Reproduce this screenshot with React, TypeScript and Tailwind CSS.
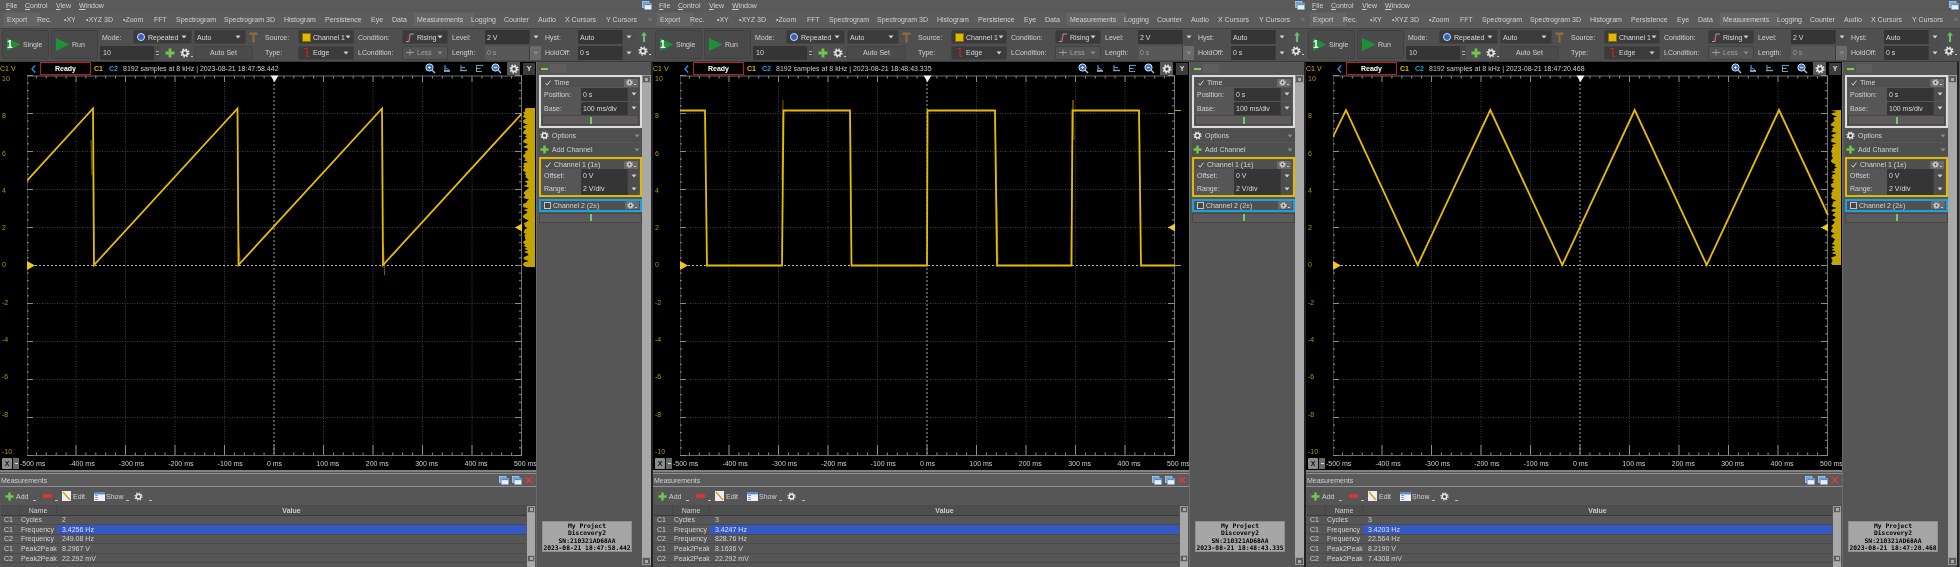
import React from "react";

const FONT = "[font-family:'Liberation_Sans',Arial,sans-serif]";

type PanelData = {
  stamp: string;
  waves: string;
  ghosts: string[];
  strip: [number, number, number, number] | null;
  values: [string, string, string, string, string];
};

const tabs = ["Export","Rec.","•XY","•XYZ 3D","•Zoom","FFT","Spectrogram","Spectrogram 3D","Histogram","Persistence","Eye","Data","Measurements","Logging","Counter","Audio","X Cursors","Y Cursors","»"];

function Caret({ dim }: { dim?: boolean }) {
  return (
    <svg width="6" height="4" viewBox="0 0 6 4" className="shrink-0">
      <path d="M0.5 0.5H5.5L3 3.5Z" fill={dim ? "#8a8a8a" : "#d0d0d0"} />
    </svg>
  );
}

function Gear({ size = 10, small }: { size?: number; small?: boolean }) {
  return (
    <span className="inline-flex items-end shrink-0">
      <svg width={size} height={size} viewBox="0 0 12 12">
        <circle cx="6" cy="6" r="4.6" fill="none" stroke="#e4e4e4" strokeWidth="1.8" strokeDasharray="1.8 1.8" />
        <circle cx="6" cy="6" r="3" fill="none" stroke="#e4e4e4" strokeWidth="2" />
        <circle cx="6" cy="6" r="1.1" fill="#3a3a3a" />
      </svg>
      {small && <span className="w-[2px] h-[1px] bg-[#ccc] ml-[1px] mb-[1px]" />}
    </span>
  );
}

function Plus({ size = 9 }: { size?: number }) {
  return (
    <svg width={size} height={size} viewBox="0 0 10 10" className="shrink-0">
      <path d="M3.6 0.5H6.4V3.6H9.5V6.4H6.4V9.5H3.6V6.4H0.5V3.6H3.6Z" fill="#6fc84a" />
    </svg>
  );
}

function UpArrow() {
  return (
    <svg width="6" height="10" viewBox="0 0 6 10">
      <path d="M3 0L6 3.5H4.1V10H1.9V3.5H0Z" fill="#66c26a" />
    </svg>
  );
}

function Play({ one }: { one?: boolean }) {
  return (
    <span className="relative inline-flex w-[15px] h-[15px] shrink-0">
      <svg width="15" height="15" viewBox="0 0 15 15">
        <path d="M1 1L14.5 7.5L1 14Z" fill="#1d9138" />
      </svg>
      {one && <span className="absolute left-[1px] top-[2px] text-[10px] leading-[11px] font-bold text-white">1</span>}
    </span>
  );
}

function Magnifier({ minus }: { minus?: boolean }) {
  return (
    <svg width="11" height="11" viewBox="0 0 11 11">
      <circle cx="4.5" cy="4.5" r="3.6" fill={minus ? "#3f78c8" : "#2f68c0"} stroke="#d9e4f0" strokeWidth="1" />
      <path d="M7 7L10 10" stroke="#aab2ba" strokeWidth="1.6" />
      <path d={minus ? "M3 4.5H6" : "M3 4.5H6M4.5 3V6"} stroke="#fff" strokeWidth="0.8" />
    </svg>
  );
}

function AlignIcon({ kind }: { kind: number }) {
  return (
    <svg width="9" height="9" viewBox="0 0 9 9">
      {kind === 0 && <><path d="M2 1V6" stroke="#3f9be0" strokeWidth="1.2" /><path d="M1 6H7V8H1Z" fill="#8a98a6" /><path d="M2 3.5L6 6" stroke="#3f9be0" /></>}
      {kind === 1 && <><path d="M2 1V7" stroke="#8a98a6" /><path d="M2 3.5H6" stroke="#3f9be0" strokeWidth="1.2" /><path d="M1 6.5H8" stroke="#8a98a6" strokeWidth="1.4" /></>}
      {kind === 2 && <><path d="M1 1.5H8" stroke="#3f9be0" strokeWidth="1.2" /><path d="M1.5 1V8" stroke="#8a98a6" /><path d="M1 4.5H5.5M1 7.5H7" stroke="#8a98a6" strokeWidth="1.2" /></>}
    </svg>
  );
}

function WinIcon() {
  return (
    <svg width="10" height="9" viewBox="0 0 10 9">
      <rect x="0.5" y="0.5" width="6.5" height="6" fill="#6ea6dc" stroke="#cfe2f4" strokeWidth="0.6" />
      <rect x="2.5" y="2.5" width="7" height="6" fill="#e8eef6" stroke="#7fa8d6" strokeWidth="0.6" />
      <rect x="2.5" y="2.5" width="7" height="1.6" fill="#4f8ed0" />
    </svg>
  );
}

function Label({ w, children }: { w: string; children: React.ReactNode }) {
  return <span className={`${w} shrink-0 text-[#cfcfcf]`}>{children}</span>;
}

function Drop({ w, icon, text, dim }: { w: string; icon?: React.ReactNode; text: string; dim?: boolean }) {
  return (
    <div className={`${w} h-[14px] flex items-center px-[1px] rounded-[2px] border border-[#434343] ${dim ? "bg-[#545454] text-[#a0a0a0]" : "bg-[#3b3b3b] text-[#d8d8d8]"}`}>
      {icon ? <span className="w-[12px] mr-[1px] flex justify-center shrink-0">{icon}</span> : <span className="w-[1px]" />}
      <span className="flex-1 whitespace-nowrap">{text}</span>
      <Caret dim={dim} />
      <span className="w-[3px] shrink-0" />
    </div>
  );
}

function Input({ w, text, dim, h = "h-[14px]" }: { w: string; text: string; dim?: boolean; h?: string }) {
  return (
    <div className={`${w} ${h} flex items-stretch rounded-[1px] overflow-hidden`}>
      <div className={`flex-1 flex items-center pl-[2px] ${dim ? "bg-[#585858] text-[#9c9c9c]" : "bg-[#353535] text-[#d8d8d8]"}`}>{text}</div>
      <div className={`w-[12px] flex items-center justify-center border-l border-[#3d3d3d] ${dim ? "bg-[#6a6a6a]" : "bg-[#4d4d4d]"}`}>
        <Caret dim={dim} />
      </div>
    </div>
  );
}

function CtrlRow({ children }: { children: React.ReactNode }) {
  return <div className="h-[14px] flex items-center">{children}</div>;
}

function SidebarField({ label, value }: { label: string; value: string }) {
  return (
    <div className="flex items-center h-[14px]">
      <span className="w-[39px] pl-[2px] text-[#d0d0d0] shrink-0">{label}</span>
      <Input w="w-[58px]" text={value} h="h-[13px]" />
    </div>
  );
}

function SliderBar({ w }: { w: string }) {
  return (
    <div className={`${w} h-[10px] bg-[#5e5a5a] border border-[#474747] flex items-center justify-center`}>
      <span className="w-[2px] h-[7px] bg-[#6ccf76]" />
    </div>
  );
}

function SectionHead({ title, check, box }: { title: string; check?: boolean; box?: boolean }) {
  return (
    <div className="h-[9px] flex items-center bg-[#505050] text-[#d4d4d4]">
      <span className="w-[12px] flex justify-center shrink-0">
        {check && <svg width="6" height="6" viewBox="0 0 6 6"><path d="M0.6 3.2L2.2 5.2L5.4 0.6" fill="none" stroke="#e0e0e0" strokeWidth="0.9" /></svg>}
        {box && <span className="w-[7px] h-[7px] bg-[#474747] border border-[#c4c4c4]" />}
      </span>
      <span className="flex-1">{title}</span>
      <span className="w-[14px] h-[8px] flex items-center justify-center bg-[#6a6a6a] rounded-[1px] mr-[1px]"><Gear size={7} small /></span>
    </div>
  );
}

function Plot({ d }: { d: PanelData }) {
  const xs = Array.from({ length: 11 }, (_, i) => 26.5 + 49.5 * i);
  const ys = Array.from({ length: 11 }, (_, i) => 75.5 + 38 * i);
  const topTicks = Array.from({ length: 51 }, (_, i) => 26.5 + 9.9 * i);
  const sideTicks = Array.from({ length: 51 }, (_, i) => 75.5 + 7.6 * i);
  const strip = d.strip;
  let stripPts = "";
  if (strip) {
    const [x0, x1, y0, y1] = strip;
    const pts: string[] = [`${x1},${y0}`, `${x1},${y1}`];
    for (let y = y1; y >= y0; y -= 1.5) {
      const r = Math.abs(Math.sin(y * 12.9898) * 43758.5453) % 1;
      pts.push(`${(x0 + r * r * 6).toFixed(1)},${y}`);
    }
    stripPts = pts.join(" ");
  }
  return (
    <svg width="509" height="381" viewBox="27 75 509 381" className="block">
      <rect x="27" y="75" width="509" height="381" fill="#000" />
      {xs.slice(1, 10).map((x, i) => (
        <line key={x} x1={x} x2={x} y1="76" y2="455" stroke={i === 4 ? "#a8a8a8" : "#3e3e3e"} strokeWidth="1" strokeDasharray={i === 4 ? "2 2" : "1 1.5"} />
      ))}
      {ys.slice(1, 10).map((y, i) => (
        <line key={y} x1="27" x2="521" y1={y} y2={y} stroke={i === 4 ? "#b4b4b4" : "#3e3e3e"} strokeWidth="1" strokeDasharray={i === 4 ? "2 2" : "1 1.5"} />
      ))}
      <path d="M27 76H521.5M27 455.5H521.5M27 76V456M521.5 76V456" stroke="#6e6e6e" strokeWidth="1" fill="none" />
      {topTicks.map((x, i) => (
        <g key={x}>
          <line x1={x} x2={x} y1="76" y2={i % 5 === 0 ? 82 : 78.5} stroke="#8c8c8c" />
          <line x1={x} x2={x} y1={i % 5 === 0 ? 445 : 452.5} y2="455" stroke="#8c8c8c" />
        </g>
      ))}
      {sideTicks.map((y, i) => (
        <g key={y}>
          <line x1="27" x2={i % 5 === 0 ? 33 : 29} y1={y} y2={y} stroke="#8c8c8c" />
          <line x1={i % 5 === 0 ? 515 : 519} x2="521.5" y1={y} y2={y} stroke="#8c8c8c" />
        </g>
      ))}
      {d.ghosts.map((g) => (
        <polyline key={g} points={g} fill="none" stroke="#7a6500" strokeWidth="1" />
      ))}
      <polyline points={d.waves} fill="none" stroke="#e6bc00" strokeWidth="1.8" strokeLinejoin="miter" />
      {strip && <polygon points={stripPts} fill="#c4a400" />}
      {!strip && (
        <path d="M522 110.5H528M522 265.5H528" stroke="#c4a400" strokeWidth="1" />
      )}
      <polygon points="27,261 35,265.5 27,270" fill="#f0c820" />
      <polygon points="515,227.5 522,223.5 522,231.5" fill="#f0c820" />
      <polygon points="270.5,75.5 278.5,75.5 274.5,82" fill="#f0f0f0" />
    </svg>
  );
}

function Panel({ d, width }: { d: PanelData; width: string }) {
  const rows: [string, string, string, boolean][] = [
    ["C1", "Cycles", d.values[0], false],
    ["C1", "Frequency", d.values[1], true],
    ["C2", "Frequency", d.values[2], false],
    ["C1", "Peak2Peak", d.values[3], false],
    ["C2", "Peak2Peak", d.values[4], false],
  ];
  return (
    <div className={`${width} h-[567px] flex flex-col bg-[#565656] overflow-hidden text-[7px] leading-[9px] text-[#d0d0d0]`}>
      {/* menu */}
      <div className="h-[10px] flex items-center bg-[#5a5a5a] shrink-0 pl-[6px] relative">
        <span className="w-[19px]"><u>F</u>ile</span>
        <span className="w-[31px]"><u>C</u>ontrol</span>
        <span className="w-[23px]"><u>V</u>iew</span>
        <span><u>W</u>indow</span>
        <span className="ml-auto mr-[1px] mt-[1px]"><WinIcon /></span>
      </div>
      {/* tabs */}
      <div className="h-[18px] mt-[1px] bg-[#5c5c5c] border-b border-[#444] shrink-0 grid items-center pl-[7px] grid-cols-[30px_27px_22px_37px_31px_22px_48px_60px_41px_46px_21px_25px_54px_33px_34px_27px_41px_42px_6px]">
        {tabs.map((t) => (
          <span key={t} className="whitespace-nowrap relative">
            {(t === "Export" || t === "Measurements") && (
              <span className="absolute -left-[3px] -top-[2px] -bottom-[2px] -right-[3px] border border-[#666] bg-[#646464] rounded-[1px]" />
            )}
            <span className={`relative ${t === "»" ? "text-[#8a8a8a]" : ""}`}>{t}</span>
          </span>
        ))}
      </div>
      {/* controls */}
      <div className="h-[33px] bg-[#4f4f4f] border-b border-[#3c3c3c] flex shrink-0 pt-[1px] pl-[2px]">
        <div className="w-[47px] h-[29px] mr-[2px] flex items-center gap-[2px] pl-[3px] bg-[#4a4a4a] border border-[#414141] rounded-[2px]">
          <Play one /> <span>Single</span>
        </div>
        <div className="w-[47px] h-[29px] mr-[2px] flex items-center gap-[2px] pl-[3px] bg-[#4a4a4a] border border-[#414141] rounded-[2px]">
          <Play /> <span>Run</span>
        </div>
        <div className="w-[165px] flex flex-col gap-[1.5px]">
          <CtrlRow>
            <Label w="w-[33px] pl-[2px]">Mode:</Label>
            <Drop w="w-[59px]" text="Repeated" icon={<span className="w-[8px] h-[8px] rounded-full bg-[#2e62c4] border border-[#dde]" />} />
            <div className="w-[2px]" />
            <Drop w="w-[52px]" text="Auto" />
            <svg width="9" height="11" viewBox="0 0 9 11" className="ml-[3px]"><path d="M0.5 0.5H8.5V3H5.6V10.5H3.4V3H0.5Z" fill="#8d6a38" /></svg>
          </CtrlRow>
          <CtrlRow>
            <div className="w-[60px] h-[14px] flex items-stretch bg-[#353535] rounded-[1px]">
              <span className="flex-1 flex items-center pl-[3px] text-[#d8d8d8]">10</span>
              <span className="w-[6px] flex flex-col items-center justify-center gap-[2px] bg-[#484848]">
                <span className="w-[3px] h-[1px] bg-[#aaa]" />
                <span className="w-[3px] h-[1px] bg-[#aaa]" />
              </span>
            </div>
            <span className="w-[18px] flex justify-center pl-[1px]"><Plus size={10} /></span>
            <span className="w-[16px] flex justify-center"><Gear size={10} small /></span>
            <div className="w-[59px] h-[14px] flex items-center justify-center bg-[#4b4b4b] border border-[#444] rounded-[2px]">Auto Set</div>
          </CtrlRow>
        </div>
        <div className="w-[93px] flex flex-col gap-[1.5px]">
          <CtrlRow>
            <Label w="w-[33px]">Source:</Label>
            <Drop w="w-[56px]" text="Channel 1" icon={<span className="w-[9px] h-[9px] bg-[#e2b800] border border-[#8a7000]" />} />
          </CtrlRow>
          <CtrlRow>
            <Label w="w-[33px]">Type:</Label>
            <Drop w="w-[56px]" text="Edge" icon={<svg width="7" height="9" viewBox="0 0 7 9"><path d="M1 0.5H4V8.5H6" fill="none" stroke="#c22" strokeWidth="1.2" /></svg>} />
          </CtrlRow>
        </div>
        <div className="w-[94px] flex flex-col gap-[1.5px]">
          <CtrlRow>
            <Label w="w-[44px]">Condition:</Label>
            <Drop w="w-[46px]" text="Rising" icon={<svg width="8" height="9" viewBox="0 0 8 9"><path d="M0 8.5H3L4 1H8" fill="none" stroke="#bbb" strokeWidth="0.8" /><path d="M1.5 6L5 3.5" stroke="#d22" strokeWidth="1.4" /></svg>} />
          </CtrlRow>
          <CtrlRow>
            <Label w="w-[44px]">LCondition:</Label>
            <Drop w="w-[46px]" text="Less" dim icon={<svg width="8" height="7" viewBox="0 0 8 7"><path d="M0 3.5H8M4 0.5V6.5" stroke="#aaa" strokeWidth="0.8" /></svg>} />
          </CtrlRow>
        </div>
        <div className="w-[93px] flex flex-col gap-[1.5px]">
          <CtrlRow><Label w="w-[33px]">Level:</Label><Input w="w-[56px]" text="2 V" /></CtrlRow>
          <CtrlRow><Label w="w-[33px]">Length:</Label><Input w="w-[56px]" text="0 s" dim /></CtrlRow>
        </div>
        <div className="w-[93px] flex flex-col gap-[1.5px]">
          <CtrlRow><Label w="w-[33px]">Hyst:</Label><Input w="w-[56px]" text="Auto" /></CtrlRow>
          <CtrlRow><Label w="w-[33px]">HoldOff:</Label><Input w="w-[56px]" text="0 s" /></CtrlRow>
        </div>
        <div className="w-[12px] flex flex-col items-center">
          <CtrlRow><UpArrow /></CtrlRow>
          <CtrlRow><Gear size={10} small /></CtrlRow>
        </div>
      </div>
      {/* body */}
      <div className="flex-1 flex min-h-0">
        <div className="w-[536px] shrink-0 flex flex-col">
          <div className="h-[13px] bg-black flex items-center shrink-0">
            <span className="w-[27px] text-[#d2ae00]">C1 V</span>
            <span className="w-[13px] flex justify-center">
              <svg width="5" height="8" viewBox="0 0 5 8"><path d="M4.2 0.6L1 4L4.2 7.4" fill="none" stroke="#2b8cf0" strokeWidth="1.4" /></svg>
            </span>
            <span className="w-[51px] h-[13px] flex items-center justify-center border border-[#b3202a] text-white font-bold">Ready</span>
            <span className="ml-[3px] w-[15px] font-bold text-[#e4ba00]">C1</span>
            <span className="w-[14px] font-bold text-[#22a0e0]">C2</span>
            <span className="text-[#cccccc] whitespace-nowrap">8192 samples at 8 kHz | {d.stamp}</span>
            <span className="ml-auto flex items-center gap-[7px] pr-[1px]">
              <Magnifier />
              <AlignIcon kind={0} />
              <AlignIcon kind={1} />
              <AlignIcon kind={2} />
              <Magnifier minus />
              <span className="w-[13px] h-[13px] -ml-[2px] flex items-center justify-center bg-[#565656]"><Gear size={10} /></span>
              <span className="w-[12px] h-[12px] -ml-[4px] flex items-center justify-center bg-[#3c3c3c] text-[#e0e0e0] font-bold">Y</span>
            </span>
          </div>
          <div className="h-[381px] flex bg-black shrink-0">
            <div className="w-[27px] flex flex-col justify-between pl-[2px] text-[#b09600]">
              {["10","8","6","4","2","0","-2","-4","-6","-8","-10"].map((n) => (
                <span key={n} className="h-[8px] leading-[8px]">{n}</span>
              ))}
            </div>
            <Plot d={d} />
          </div>
          <div className="h-[14px] bg-black flex items-center shrink-0 text-[#cccccc]">
            <span className="w-[20px] flex items-center pl-[2px] gap-[1px]">
              <span className="w-[10px] h-[11px] bg-[#8c8c8c] text-[#111] font-bold flex items-center justify-center rounded-[1px]">X</span>
              <span className="w-[6px] h-[11px] bg-[#6a6a6a] flex items-center justify-center"><span className="w-[3px] h-[1px] bg-[#ddd]" /></span>
            </span>
            <div className="grid grid-cols-[repeat(10,49.4px)_22px]">
              {["-500 ms","-400 ms","-300 ms","-200 ms","-100 ms","0 ms","100 ms","200 ms","300 ms","400 ms","500 ms"].map((t) => (
                <span key={t} className="whitespace-nowrap">{t}</span>
              ))}
            </div>
          </div>
          {/* measurements */}
          <div className="flex-1 bg-[#565656] flex flex-col min-h-0 border-t-2 border-[#828282]">
            <div className="h-[14px] mt-[1px] border-y border-[#8e8e8e] flex items-center pl-[1px] bg-[#5b5b5b] shrink-0">
              <span>Measurements</span>
              <span className="ml-auto flex items-center gap-[3px] pr-[3px]">
                <WinIcon />
                <WinIcon />
                <svg width="8" height="8" viewBox="0 0 8 8"><path d="M1 1L7 7M7 1L1 7" stroke="#e03a3a" strokeWidth="1.7" /></svg>
              </span>
            </div>
            <div className="h-[19px] flex items-center bg-[#565656] shrink-0 pl-[5px] border-b border-[#4c4c4c]">
              <Plus size={9} />
              <span className="ml-[2px] w-[17px]">Add</span>
              <span className="w-[3px] h-[1px] bg-[#bbb] mt-[8px] mr-[7px]" />
              <svg width="9" height="4" viewBox="0 0 9 4"><rect width="9" height="4" fill="#d8343c" rx="1" /></svg>
              <span className="w-[3px] h-[1px] bg-[#bbb] mt-[8px] ml-[3px] mr-[4px]" />
              <svg width="9" height="10" viewBox="0 0 9 10"><rect width="9" height="10" fill="#eee" /><path d="M1 1L8 9" stroke="#c8a020" strokeWidth="1.4" /></svg>
              <span className="ml-[2px] w-[21px]">Edit</span>
              <svg width="11" height="9" viewBox="0 0 11 9"><rect width="11" height="9" fill="#eef2f8" /><path d="M0 0H11V2H0ZM1 3.5H4M1 5.5H4M1 7.5H4" stroke="#5c8ac8" strokeWidth="0.8" fill="#5c8ac8" /></svg>
              <span className="ml-[1px] w-[20px]">Show</span>
              <span className="w-[3px] h-[1px] bg-[#bbb] mt-[8px] mr-[5px]" />
              <Gear size={9} />
              <span className="w-[3px] h-[1px] bg-[#bbb] mt-[8px] ml-[6px]" />
            </div>
            <div className="flex-1 flex min-h-0">
              <div className="w-[526px] pl-[1px] flex flex-col">
                <div className="h-[9.5px] flex items-center bg-[#4e4e4e] border-b border-[#3a3a3a]">
                  <span className="w-[18px]" />
                  <span className="w-[38px] text-center border-x border-[#444]">Name</span>
                  <span className="flex-1 text-center font-bold text-[#cccccc]">Value</span>
                </div>
                {rows.map(([c, n, v, sel], i) => (
                  <div key={i} className="h-[9.6px] flex items-center border-b border-[#4a4a4a]">
                    <span className="w-[18px] pl-[3px]">{c}</span>
                    <span className="w-[38px] pl-[2px] whitespace-nowrap">{n}</span>
                    <span className={`flex-1 h-full flex items-center pl-[5px] ${sel ? "bg-[#3558c4] text-[#dde2f2]" : ""}`}>{v}</span>
                  </div>
                ))}
              </div>
              <div className="w-[8px] ml-[1px] flex flex-col bg-[#a8a8a8]">
                <span className="h-[7px] bg-[#5c5c5c] border border-[#999] flex items-center justify-center"><span className="w-[3px] h-[3px] bg-[#aaa]" /></span>
                <span className="flex-1" />
                <span className="h-[7px] bg-[#5c5c5c] border border-[#999] flex items-center justify-center mb-[5px]"><span className="w-[3px] h-[3px] bg-[#aaa]" /></span>
              </div>
            </div>
          </div>
        </div>
        {/* sidebar */}
        <div className="w-[117px] flex min-h-0 border-l border-[#6a6a6a]">
          <div className="w-[105px] pl-[2px] flex flex-col bg-[#565656]">
            <div className="h-[13px] flex items-center pl-[2px] shrink-0">
              <span className="w-[7px] h-[2px] bg-[#7ed04a]" />
              <span className="ml-[2px] w-[16px] h-[9px] bg-[#5e5e5e]" />
            </div>
            <div className="w-[103px] h-[53px] border-2 border-[#dcdcdc] p-[1px] flex flex-col shrink-0">
              <SectionHead title="Time" check />
              <SidebarField label="Position:" value="0 s" />
              <SidebarField label="Base:" value="100 ms/div" />
              <SliderBar w="w-full" />
            </div>
            <div className="w-[103px] h-[13px] mt-[1px] flex items-center bg-[#4f4f4f] pl-[1px] pr-[2px] gap-[3px] shrink-0">
              <Gear size={9} /><span className="flex-1">Options</span><Caret dim />
            </div>
            <div className="w-[103px] h-[13px] mt-[1px] flex items-center bg-[#4f4f4f] pl-[1px] pr-[2px] gap-[3px] shrink-0">
              <Plus size={9} /><span className="flex-1">Add Channel</span><Caret dim />
            </div>
            <div className="w-[103px] h-[40px] mt-[1px] border-2 border-[#e3b800] p-[1px] flex flex-col shrink-0">
              <SectionHead title="Channel 1 (1±)" check />
              <SidebarField label="Offset:" value="0 V" />
              <SidebarField label="Range:" value="2 V/div" />
            </div>
            <div className="w-[103px] h-[13px] mt-[1.5px] border-2 border-[#17a3e0] flex flex-col justify-center shrink-0">
              <SectionHead title="Channel 2 (2±)" box />
            </div>
            <div className="mt-[1px] shrink-0">
              <SliderBar w="w-[103px]" />
            </div>
          </div>
          <div className="w-[9px] mt-[13px] mb-[2px] flex flex-col bg-[#a8a8a8]">
            <span className="h-[8px] bg-[#5c5c5c] border border-[#999] flex items-center justify-center"><span className="w-[3px] h-[3px] bg-[#aaa]" /></span>
            <span className="flex-1" />
            <span className="h-[8px] bg-[#5c5c5c] border border-[#999] flex items-center justify-center"><span className="w-[3px] h-[3px] bg-[#aaa]" /></span>
          </div>
          <div className="flex-1 bg-[#222]" />
        </div>
      </div>
    </div>
  );
}

function InfoBox({ stamp }: { stamp: string }) {
  return (
    <div className="w-[90px] h-[31px] bg-[#a6a6a6] border border-[#8f8f8f] flex flex-col items-center justify-center text-black font-bold text-[6.3px] leading-[7.4px] [font-family:'DejaVu_Sans_Mono',monospace] whitespace-nowrap">
      <span>My Project</span>
      <span>Discovery2</span>
      <span>SN:210321AD68AA</span>
      <span>{stamp}</span>
    </div>
  );
}

const panels: PanelData[] = [
  {
    stamp: "2023-08-21 18:47:58.442",
    waves: "27,180.7 93,108.5 94,265 237.5,108.5 238.5,265 382,108.5 383,265 521.5,114",
    ghosts: ["91,140 92,175", "238.5,240 240,262", "383.5,245 384.5,275"],
    strip: [523, 535, 108, 267],
    values: ["2", "3.4256 Hz", "249.08 Hz", "8.2967 V", "22.292 mV"],
  },
  {
    stamp: "2023-08-21 18:48:43.335",
    waves: "27,110.5 52,110.5 54,265.5 129,265.5 130.5,110.5 197,110.5 198.5,265.5 274,265.5 274.5,110.5 342,110.5 344,265.5 418.5,265.5 419.5,110.5 486,110.5 488,265.5 522,265.5",
    ghosts: ["130,100 129,180", "342,120 345,262", "418,262 420,100", "420,100 421,140"],
    strip: null,
    values: ["3", "3.4247 Hz", "828.76 Hz", "8.1636 V", "22.292 mV"],
  },
  {
    stamp: "2023-08-21 18:47:20.468",
    waves: "27,136.7 40,110 111.7,265 184.3,110 256.3,265 328.7,110 400.7,265 473,110 522,215",
    ghosts: [],
    strip: [525, 535, 110, 265],
    values: ["3", "3.4203 Hz", "22.564 Hz", "8.2190 V", "7.4308 mV"],
  },
];

export default function App() {
  return (
    <div className={`w-[1960px] h-[567px] overflow-hidden flex bg-[#222] blur-[0.3px] ${FONT}`}>
      {panels.map((p, i) => (
        <div key={p.stamp} className={`relative ${i === 2 ? "w-[654px]" : "w-[653px]"} h-[567px] shrink-0`}>
          <Panel d={p} width={i === 2 ? "w-[654px]" : "w-[653px]"} />
          <div className="absolute left-[542px] top-[521px]">
            <InfoBox stamp={p.stamp} />
          </div>
        </div>
      ))}
    </div>
  );
}
